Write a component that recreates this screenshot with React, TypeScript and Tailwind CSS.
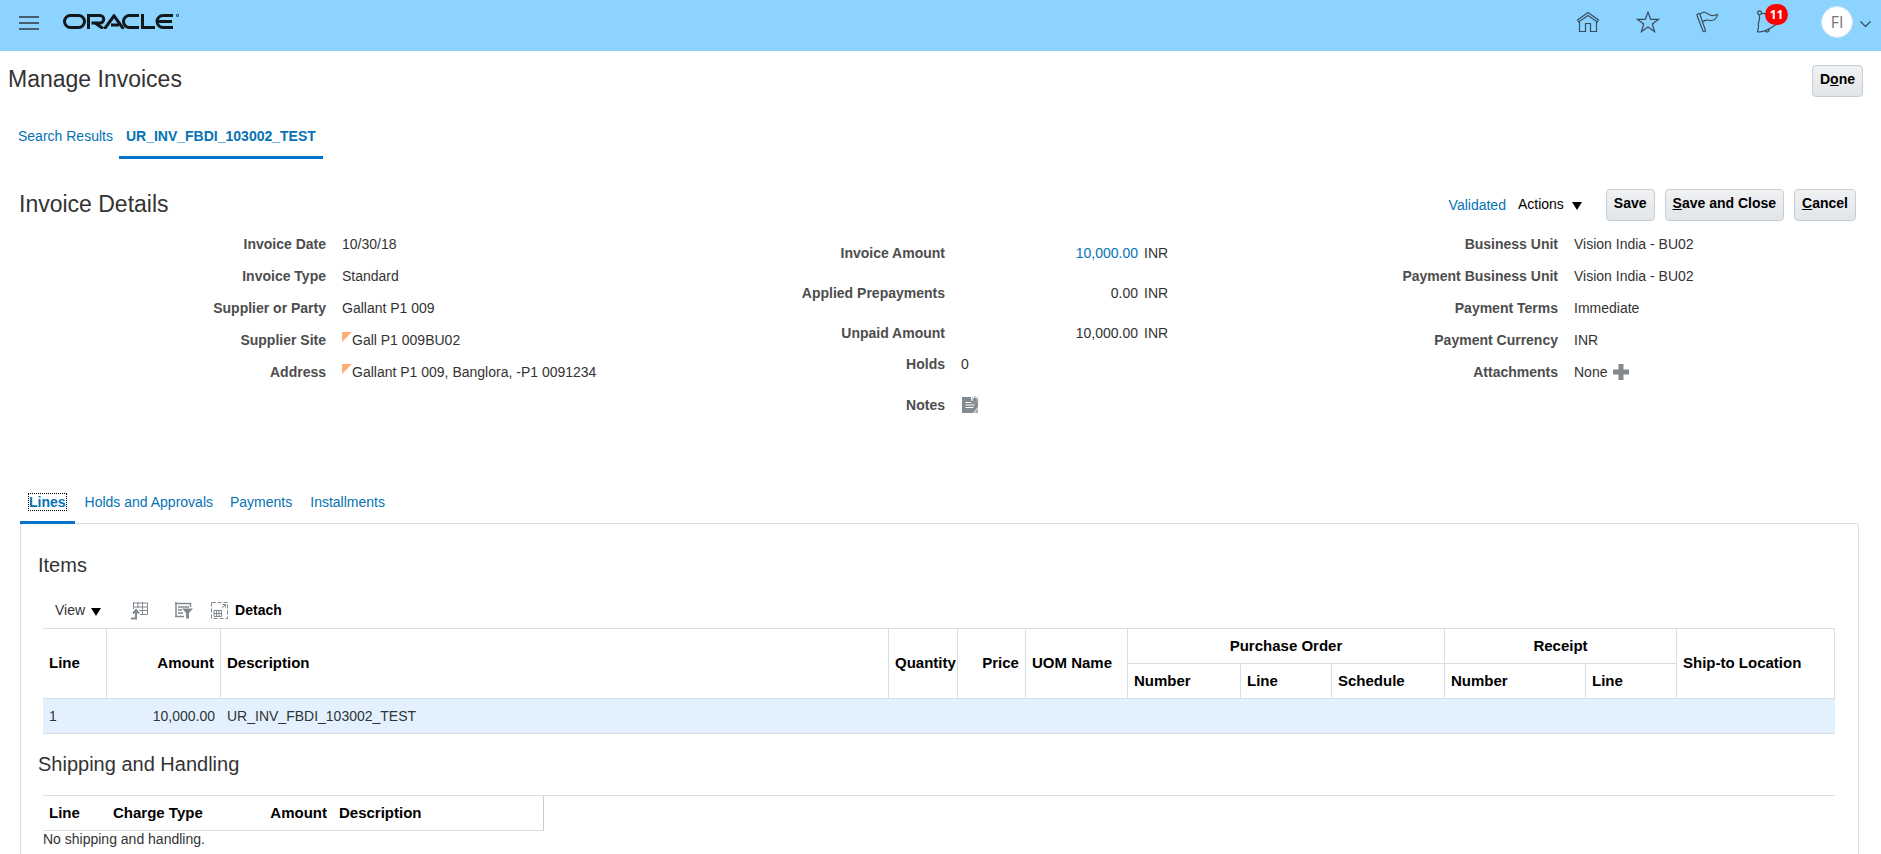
import React from 'react';

const caret = <svg width="10" height="8" viewBox="0 0 10 8" className="mt-[3px]" aria-hidden="true"><path d="M0 0h10L5 8z" fill="#000" /></svg>;

const details = [
  { label: "Invoice Date", value: "10/30/18" },
  { label: "Invoice Type", value: "Standard" },
  { label: "Supplier or Party", value: "Gallant P1 009" },
  { label: "Supplier Site", value: "Gall P1 009BU02", flagged: true },
  { label: "Address", value: "Gallant P1 009, Banglora, -P1 0091234", flagged: true },
];

const amounts = [
  { label: "Invoice Amount", value: "10,000.00", link: true },
  { label: "Applied Prepayments", value: "0.00" },
  { label: "Unpaid Amount", value: "10,000.00" },
];

const business = [
  { label: "Business Unit", value: "Vision India - BU02" },
  { label: "Payment Business Unit", value: "Vision India - BU02" },
  { label: "Payment Terms", value: "Immediate" },
  { label: "Payment Currency", value: "INR" },
];

const buttonStyle = "h-8 cursor-pointer rounded border border-[#c4ced7] bg-linear-to-b from-[#f0f1f3] to-[#e2e6e9] px-[7px] pb-1 font-bold text-black";
const th = "border-[#d6dfe6] px-[6px] text-left font-bold";

const Header: React.FC = () => (
  <header className="flex h-[51px] items-center bg-[#8cd3ff] pl-[19px] pr-[10px]">
    <button type="button" aria-label="Menu" className="mb-[6px] cursor-pointer">
      <svg width="20" height="14" viewBox="0 0 20 14" stroke="#30383d" strokeWidth="1.4">
        <path d="M0 1h20M0 7h20M0 13h20" />
      </svg>
    </button>
    <a href="#" aria-label="Oracle" className="ml-6 mb-[8px]">
      <svg width="116" height="15" viewBox="0 0 116 15" fill="none" stroke="#10181c" strokeWidth="3">
        <path d="M7.500 1.500h8a6 6 0 0 1 0 12h-8a6 6 0 0 1 0-12z" />
        <path d="M25.500 15V1.500H37a3.700 3.700 0 0 1 0 7.400H28.500M32 9l8 5.500" />
        <path d="M41.500 15L51 1.800L60.500 15M48 11h8" />
        <path d="M76 1.500H66.500a6 6 0 0 0 0 12H76M79.500 0V13.500H92M110 1.500H100a6 6 0 0 0 0 12H110M95 7.500H109" />
        <circle cx="114.500" cy="1.500" r="1" strokeWidth="1" />
      </svg>
    </a>
    <nav className="ml-auto flex items-center">
      <a href="#" aria-label="Home" className="mb-[7px] mr-[36px]">
        <svg width="24" height="22" viewBox="0 0 24 22" fill="none" stroke="#3a4d59" strokeWidth="1.2">
          <path d="M1.500 9L12 1.500L22.500 9L21.300 11L12 4.500L2.700 11zM3.500 10.500V20.500H9.500V12.500H14.500V20.500H20.500V10.500" />
        </svg>
      </a>
      <a href="#" aria-label="Favorites" className="mb-[7px] mr-[36px]">
        <svg width="24" height="22" viewBox="0 0 24 22" fill="none" stroke="#3a4d59" strokeWidth="1.2">
          <path d="M12 1L14.700 8.300H22.500L16.300 13L18.600 20.600L12 16L5.400 20.600L7.700 13L1.500 8.300H9.300z" />
        </svg>
      </a>
      <a href="#" aria-label="Watchlist" className="mb-[7px] mr-[36px]">
        <svg width="24" height="22" viewBox="0 0 24 22" fill="none" stroke="#3a4d59" strokeWidth="1.2">
          <path d="M1 4.500C.5 3 3 2 4 3.500L9.500 19.500C9.500 21 7.500 21 7 20zM4 3.500C7 -.5 10 1.500 13 3.500S19 4.500 21.500 3.500C21 6.500 19 9 15.500 9.500C12 9.800 10 7.500 6.500 11" />
        </svg>
      </a>
      <a href="#" aria-label="Notifications" className="relative mb-[7px] mr-[41px]">
        <svg width="24" height="24" viewBox="0 0 24 24" fill="none" stroke="#3a4d59" strokeWidth="1.2">
          <path d="M3 5C5.500 10 1 12 2.500 16C3 18.500 1.500 19 1.500 22C7 22 14 19 20 14.500M5.500 3.500C9 3 14 5 15 8M9 20.500c1 2.500 5 1.500 4-2" />
          <circle cx="3.500" cy="2.800" r="1.900" />
        </svg>
        <span className="absolute -top-[6px] left-[9px] flex h-[21px] w-[23px] items-center justify-center rounded-full bg-[#ff0000] font-['Open_Sans',sans-serif] text-xs font-bold text-white">11</span>
      </a>
      <button type="button" aria-label="User menu" className="mb-[7px] flex cursor-pointer items-center gap-[7px]">
        <span className="flex size-8 items-center justify-center rounded-full border border-[#d5e4ee] bg-white font-['Open_Sans',sans-serif] text-[16px] text-[#777]">FI</span>
        <svg width="11" height="6" viewBox="0 0 11 6" fill="none" stroke="#30485a" strokeWidth="1.2" className="mt-1"><path d="M.5.5L5.500 5.500L10.500.5" /></svg>
      </button>
    </nav>
  </header>
);

const InvoiceDetails: React.FC = () => (
  <div className="grid h-[266px] grid-cols-[326px_445px_174px_598px_1fr] items-start text-[14px] leading-8">
    <dl className="col-span-2 grid grid-cols-subgrid">
      {details.map((d) => (
        <React.Fragment key={d.label}>
          <dt className="text-right font-bold text-[#4d4d4d]">{d.label}</dt>
          <dd className="flex pl-4">
            {d.flagged && <svg width="10" height="10" viewBox="0 0 10 10" className="mt-2"><path d="M0 0h10L0 10z" fill="#ffad75" /></svg>}
            {d.value}
          </dd>
        </React.Fragment>
      ))}
    </dl>
    <dl className="col-span-2 grid grid-cols-subgrid pt-[5px]">
      {amounts.map((a) => (
        <React.Fragment key={a.label}>
          <dt className="text-right font-bold leading-10 text-[#4d4d4d]">{a.label}</dt>
          <dd className="flex gap-[6px] leading-10">
            <span className="w-[193px] text-right">
              {a.link ? <a href="#" className="text-[#0572b5]">{a.value}</a> : a.value}
            </span>
            INR
          </dd>
        </React.Fragment>
      ))}
      <dt className="-mt-1 text-right font-bold leading-[30px] text-[#4d4d4d]">Holds</dt>
      <dd className="-mt-1 pl-4 leading-[30px]">0</dd>
      <dt className="pt-[6px] text-right font-bold leading-10 text-[#4d4d4d]">Notes</dt>
      <dd className="flex items-center pl-[17px] pt-[5px]">
        <button type="button" aria-label="Add note" className="cursor-pointer">
          <svg width="17" height="17" viewBox="0 0 17 17">
            <path d="M0 1h9v4h7v6l-5 6H0z" fill="#82898f" />
            <path d="M3.500 6.500H9M3.500 9h9M3.500 11.500h8" stroke="#fff" />
            <path d="M16 12v5h-4z" fill="#a5abb0" />
            <path d="M13 0v8M9 4h8M10 1l6 6M16 1l-6 6" stroke="#9aa0a5" />
            <circle cx="13" cy="4" r="2" fill="#82898f" />
          </svg>
        </button>
      </dd>
    </dl>
    <dl className="grid grid-cols-[15px_1fr]">
      {business.map((b) => (
        <React.Fragment key={b.label}>
          <dt className="flex justify-end whitespace-nowrap font-bold text-[#4d4d4d]">{b.label}</dt>
          <dd className="pl-4">{b.value}</dd>
        </React.Fragment>
      ))}
      <dt className="flex justify-end font-bold text-[#4d4d4d]">Attachments</dt>
      <dd className="flex items-center gap-[6px] pl-4">
        None
        <button type="button" aria-label="Add attachment" className="cursor-pointer">
          <svg width="16" height="16" viewBox="0 0 16 16"><path d="M5.500 0h5v5.500H16v5h-5.500V16h-5v-5.500H0v-5h5.500z" fill="#82898f" /></svg>
        </button>
      </dd>
    </dl>
  </div>
);

const ItemsTable: React.FC = () => (
  <table className="w-full table-fixed border-separate border-spacing-0 text-[14px]">
    <colgroup>
      <col className="w-[64px]" /><col className="w-[114px]" /><col /><col className="w-[69px]" />
      <col className="w-[68px]" /><col className="w-[102px]" /><col className="w-[113px]" /><col className="w-[91px]" />
      <col className="w-[113px]" /><col className="w-[141px]" /><col className="w-[91px]" /><col className="w-[158px]" />
    </colgroup>
    <thead className="text-[15px] text-black">
      <tr className="h-[36px]">
        <th rowSpan={2} className={`${th} border-y border-r`}>Line</th>
        <th rowSpan={2} className={`${th} border-y border-r text-right!`}>Amount</th>
        <th rowSpan={2} className={`${th} border-y border-r`}>Description</th>
        <th rowSpan={2} className={`${th} border-y border-r`}>Quantity</th>
        <th rowSpan={2} className={`${th} border-y border-r text-right!`}>Price</th>
        <th rowSpan={2} className={`${th} border-y border-r`}>UOM Name</th>
        <th colSpan={3} className={`${th} border-y border-r text-center!`}>Purchase Order</th>
        <th colSpan={2} className={`${th} border-y border-r text-center!`}>Receipt</th>
        <th rowSpan={2} className={`${th} border-y border-r`}>Ship-to Location</th>
      </tr>
      <tr className="h-[35px]">
        {["Number", "Line", "Schedule", "Number", "Line"].map((name, i) => (
          <th key={i} className={`${th} border-b border-r`}>{name}</th>
        ))}
      </tr>
    </thead>
    <tbody>
      <tr className="h-[35px] bg-[#e3f1ff]">
        <td className="border-b border-[#d9dde2] px-[6px]">1</td>
        <td className="border-b border-[#d9dde2] px-[6px] text-right">10,000.00</td>
        <td className="border-b border-[#d9dde2] px-[6px]">UR_INV_FBDI_103002_TEST</td>
        <td colSpan={9} className="border-b border-[#d9dde2]"></td>
      </tr>
    </tbody>
  </table>
);

const App: React.FC = () => {
  return (
    <div className="flex h-screen flex-col overflow-hidden bg-white font-['Liberation_Sans',Arial,sans-serif] text-[14px] text-[#333]">
      <Header />

      <div className="flex items-start justify-between pl-[8px] pr-[18px] pt-[14px]">
        <h1 className="text-[23px] leading-[28px]">Manage Invoices</h1>
        <button type="button" className={buttonStyle}>D<u>o</u>ne</button>
      </div>

      <nav className="mt-[17px] flex pl-[8px] text-[#0572b5]">
        <a href="#" className="pl-[10px] pr-[6px] pt-[12px] leading-5">Search Results</a>
        <a href="#" className="border-b-3 border-[#0572ce] px-[7px] pb-[10px] pt-[12px] font-bold leading-5">UR_INV_FBDI_103002_TEST</a>
      </nav>

      <div className="mt-[30px] flex items-start pl-[19px] pr-[25px]">
        <h2 className="mr-auto text-[23px] leading-[30px]">Invoice Details</h2>
        <a href="#" className="mr-3 leading-8 text-[#0572b5]">Validated</a>
        <button type="button" className="mr-[24px] flex cursor-pointer items-center gap-2 leading-[30px] text-black">Actions {caret}</button>
        <div className="flex gap-[10px]">
          <button type="button" className={buttonStyle}>Save</button>
          <button type="button" className={buttonStyle}><u>S</u>ave and Close</button>
          <button type="button" className={buttonStyle}><u>C</u>ancel</button>
        </div>
      </div>

      <div className="pt-[7px]"><InvoiceDetails /></div>

      <nav className="relative mx-[20px] flex text-[#0572b5]">
        <a href="#" className="-mb-px border-b-3 border-[#0572ce] px-[9px] pb-[11px] font-bold leading-4"><span className="outline-1 outline-dotted outline-black">Lines</span></a>
        <a href="#" className="pl-[10px] pr-[8px] leading-4">Holds and Approvals</a>
        <a href="#" className="px-[9px] leading-4">Payments</a>
        <a href="#" className="px-[9px] leading-4">Installments</a>
      </nav>

      <main className="ml-[20px] mr-[22px] flex-1 rounded-t-sm border border-b-0 border-[#d6dfe6] pl-[17px] pr-[23px] pt-[28px]">
        <h3 className="text-[20px] leading-[26px]">Items</h3>
        <div className="ml-[5px]">
          <div className="mt-[17px] flex h-[33px] items-center pb-[2px] pl-[12px]">
            <button type="button" className="flex cursor-pointer items-center gap-[6px] text-[#333]">View {caret}</button>
            <button type="button" aria-label="Freeze" className="ml-[30px] cursor-pointer">
              <svg width="17" height="18" viewBox="0 0 17 18" fill="none" stroke="#82898f">
                <path d="M2 1H16.500V12.500H9M2.500 0V7M2 5H16.500M8 8.500H16.500M7 0V6M11.500 0V12.500" /><path d="M0 16.500H5V9M2 11.500l3-3.500l3 3.500" strokeWidth="2" />
              </svg>
            </button>
            <button type="button" aria-label="Query by Example" className="ml-[27px] cursor-pointer">
              <svg width="18" height="17" viewBox="0 0 18 17" fill="none" stroke="#82898f">
                <path d="M0 1.500H16M1 0V14.500M0 14.500H9M15.500 1V5M3 5H14M3 8H7M3 11H8" strokeWidth="1.5" /><path d="M7 6.500H18L14 11V16.500H11V11z" fill="#82898f" stroke="none" />
              </svg>
            </button>
            <button type="button" className="ml-[18px] flex cursor-pointer items-center gap-[7px] font-bold text-black">
              <svg width="17" height="17" viewBox="0 0 17 17" fill="none" stroke="#82898f">
                <path d="M.5.5H16.500V16.500H.5z" strokeDasharray="4 2" /><path d="M3 8.500H10.500V14.500H3zM3 11.500H10.500M5.500 8.500V14.500M8 8.500V14.500M11 6l3-3M11.500 2.500h3v3" />
              </svg>
              Detach
            </button>
          </div>
          <ItemsTable />
        </div>

        <h3 className="mt-[17px] text-[20px] leading-[26px]">Shipping and Handling</h3>
        <div className="ml-[5px] mt-[18px] border-t border-[#d6dfe6]">
          <table className="w-[501px] table-fixed border-separate border-spacing-0 border-r border-[#c9ced4] text-[15px] text-black">
            <colgroup><col className="w-[64px]" /><col className="w-[113px]" /><col className="w-[113px]" /><col /></colgroup>
            <thead>
              <tr className="h-[35px]">
                <th className={`${th} border-b`}>Line</th>
                <th className={`${th} border-b`}>Charge Type</th>
                <th className={`${th} border-b text-right!`}>Amount</th>
                <th className={`${th} border-b`}>Description</th>
              </tr>
            </thead>
          </table>
          <p className="leading-4">No shipping and handling.</p>
        </div>
      </main>
    </div>
  );
};

export default App;
